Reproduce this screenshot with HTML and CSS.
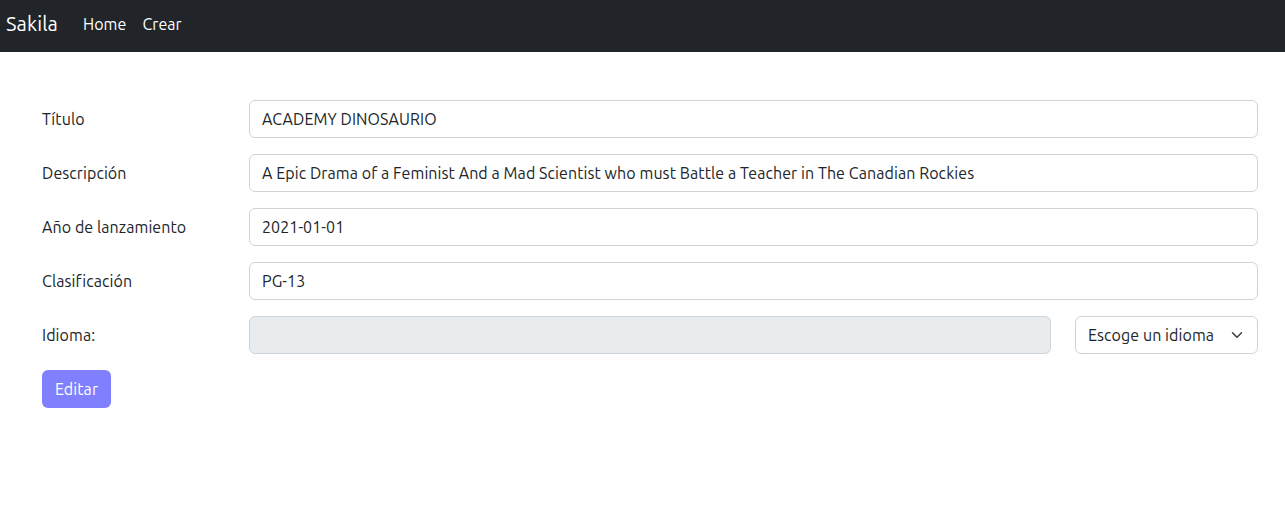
FILE: index.html
```html
<!DOCTYPE html>
<html lang="es">
<head>
<meta charset="utf-8">
<title>Sakila</title>
<link rel="stylesheet" href="styles.css">
</head>
<body>
<nav class="navbar">
  <a class="brand" href="#">Sakila</a>
  <a class="nav-link" href="#">Home</a>
  <a class="nav-link" href="#">Crear</a>
</nav>
<form class="form">
  <div class="row">
    <label class="label">Título</label>
    <div class="field"><input class="input" type="text" value="ACADEMY DINOSAURIO"></div>
  </div>
  <div class="row">
    <label class="label">Descripción</label>
    <div class="field"><input class="input" type="text" value="A Epic Drama of a Feminist And a Mad Scientist who must Battle a Teacher in The Canadian Rockies"></div>
  </div>
  <div class="row">
    <label class="label">Año de lanzamiento</label>
    <div class="field"><input class="input" type="text" value="2021-01-01"></div>
  </div>
  <div class="row">
    <label class="label">Clasificación</label>
    <div class="field"><input class="input" type="text" value="PG-13"></div>
  </div>
  <div class="row">
    <label class="label">Idioma:</label>
    <div class="field split">
      <input class="input" type="text" disabled>
      <div class="select">
        <span>Escoge un idioma</span>
        <svg width="16" height="12" viewBox="0 0 16 16" fill="none" stroke="#343a40" stroke-width="2" stroke-linecap="round" stroke-linejoin="round"><path d="m2 5 6 6 6-6"/></svg>
      </div>
    </div>
  </div>
  <button class="btn" type="button">Editar</button>
</form>
</body>
</html>
```

FILE: styles.css
```css
* { box-sizing: border-box; }
html, body { margin: 0; }
body {
  font-family: "Ubuntu", "Noto Sans", sans-serif;
  font-size: 16px;
  line-height: 24px;
  letter-spacing: 0.08px;
  color: #212529;
  background: #fff;
}
.navbar {
  height: 52px;
  background: #212529;
  display: flex;
  align-items: center;
  padding: 0 6px 4px;
}
.brand {
  color: #fff;
  font-size: 20px;
  line-height: 30px;
  letter-spacing: 0.1px;
  text-decoration: none;
  margin-right: 17px;
}
.nav-link {
  color: #fff;
  text-decoration: none;
  padding: 8px;
}
.form {
  padding: 48px 27px 0 42px;
  display: flex;
  flex-direction: column;
  gap: 16px;
}
.row {
  display: flex;
  align-items: center;
}
.label {
  width: 207px;
  flex: none;
  padding: 7px 0;
}
.field { flex: 1; display: flex; }
.split { gap: 24px; }
.input {
  flex: 1;
  min-width: 0;
  height: 38px;
  border: 1px solid #ced4da;
  border-radius: 6px;
  padding: 6px 12px;
  font: inherit;
  letter-spacing: inherit;
  color: #212529;
  background: #fff;
}
.input:disabled { background: #e9ecef; }
.select {
  flex: none;
  width: 183px;
  height: 38px;
  border: 1px solid #ced4da;
  border-radius: 6px;
  padding: 6px 12px;
  display: flex;
  align-items: center;
  justify-content: space-between;
}
.btn {
  align-self: flex-start;
  height: 38px;
  width: 69px;
  padding: 6px 0;
  text-align: center;
  border: 0;
  border-radius: 6px;
  background: #8080ff;
  color: #fff;
  font: inherit;
  letter-spacing: inherit;
}
```
